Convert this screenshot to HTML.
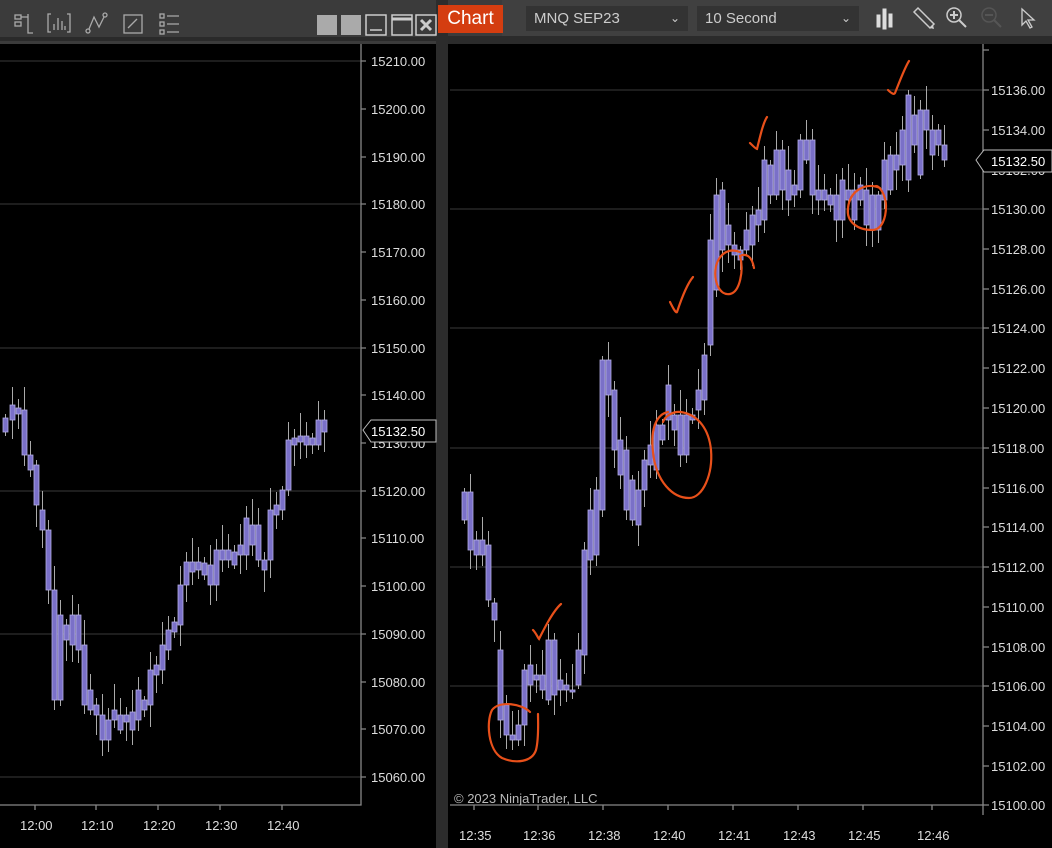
<!DOCTYPE html><html><head><meta charset="utf-8"><style>
body{margin:0;width:1052px;height:848px;background:#000;overflow:hidden;font-family:"Liberation Sans",sans-serif;position:relative}
.a{position:absolute}
svg text{font-family:"Liberation Sans",sans-serif}
</style></head><body>
<div class="a" style="left:0;top:0;width:1052px;height:44px;background:#3b3b3b"></div>
<div class="a" style="left:0;top:37px;width:436px;height:4px;background:#2a2a2a"></div>
<div class="a" style="left:502px;top:0;width:550px;height:36px;background:#404040"></div>
<div class="a" style="left:448px;top:36px;width:604px;height:8px;background:#2b2b2b"></div>
<div class="a" style="left:436px;top:0;width:12px;height:848px;background:#2c2c2c"></div>
<div class="a" style="left:438px;top:5px;width:65px;height:28px;background:#d43d10;color:#fff;font-size:19px;line-height:28px;text-align:center">Chart</div>
<div class="a" style="left:526px;top:6px;width:162px;height:25px;background:#333;color:#ccc;font-size:15px;line-height:25px;padding-left:8px;box-sizing:border-box">MNQ SEP23<span style="position:absolute;right:8px;font-size:12px">&#8964;</span></div>
<div class="a" style="left:697px;top:6px;width:162px;height:25px;background:#333;color:#ccc;font-size:15px;line-height:25px;padding-left:8px;box-sizing:border-box">10 Second<span style="position:absolute;right:8px;font-size:12px">&#8964;</span></div>
<svg class="a" style="left:0;top:0" width="1052" height="44">
<g stroke="#aaa" stroke-width="1.3" fill="none">
<rect x="15" y="15" width="6" height="4"/><rect x="15" y="22" width="6" height="4"/><path d="M21 17h7M28 14v19h5"/>
<path d="M51 14h-3v18h3M67 14h3v18h-3M54 30v-6M58 30v-12M62 30v-9M65 30v-4"/>
<circle cx="88" cy="31" r="2"/><circle cx="105" cy="15" r="2"/><path d="M89 29l5-12 5 10 5-10"/>
<rect x="124" y="15" width="18" height="18"/><path d="M128 28l9-9"/>
<rect x="160" y="14" width="4" height="4"/><rect x="160" y="22" width="4" height="4"/><rect x="160" y="30" width="4" height="4"/><path d="M167 16h12M167 24h12M167 32h12"/>
</g>
<rect x="317" y="15" width="20" height="20" fill="#aaa"/><rect x="341" y="15" width="20" height="20" fill="#aaa"/>
<g stroke="#ccc" stroke-width="1.5" fill="none"><rect x="366" y="15" width="20" height="20"/><path d="M370 30h12"/><rect x="392" y="15" width="20" height="20"/><path d="M392 19h20" stroke-width="3"/><rect x="416" y="15" width="20" height="20"/><path d="M421 20l10 10M431 20l-10 10" stroke-width="3"/></g>
<g fill="#ddd" stroke="#ddd"><rect x="877" y="15" width="3" height="12"/><rect x="883" y="9" width="3" height="20"/><rect x="889" y="14" width="3" height="13"/></g>
<path d="M914 12l4-4 16 16-4 4z" fill="none" stroke="#ccc" stroke-width="1.5"/><path d="M930 28l4 1-1-4" fill="#ccc"/>
<circle cx="954" cy="15" r="7" fill="none" stroke="#ccc" stroke-width="1.5"/><path d="M950 15h8M954 11v8M959 20l7 7" stroke="#ccc" stroke-width="2"/>
<circle cx="989" cy="15" r="7" fill="none" stroke="#555" stroke-width="1.5"/><path d="M985 15h8M994 20l7 7" stroke="#555" stroke-width="2"/>
<path d="M1022 9l0 16 4-4 4 7 2-1-4-7 6 0z" fill="none" stroke="#ccc" stroke-width="1.3"/>
</svg>
<svg id="s" class="a" style="left:0;top:0" width="1052" height="848">
<g stroke="#3a3a3a" stroke-width="1">
<path d="M0 61H361M0 204H361M0 348H361M0 491H361M0 634H361M0 777H361"/>
<path d="M450 90H983M450 209H983M450 328H983M450 448H983M450 567H983M450 686H983"/>
</g>
<g stroke="#888" stroke-width="1.3" fill="none">
<path d="M361 44V805H0"/><path d="M983 44V815M450 805H983"/>
<path d="M361 61h5M361 109h5M361 157h5M361 204h5M361 252h5M361 300h5M361 348h5M361 395h5M361 443h5M361 491h5M361 538h5M361 586h5M361 634h5M361 682h5M361 729h5M361 777h5"/>
<path d="M983 50h6M983 90h6M983 130h6M983 170h6M983 209h6M983 249h6M983 289h6M983 328h6M983 368h6M983 408h6M983 448h6M983 488h6M983 527h6M983 567h6M983 607h6M983 647h6M983 686h6M983 726h6M983 766h6M983 805h6"/>
<path d="M35 805v5M96 805v5M158 805v5M220 805v5M282 805v5M474 805v5M538 805v5M603 805v5M668 805v5M733 805v5M798 805v5M863 805v5M932 805v5"/>
</g>
<g fill="#ddd" font-size="13">
<text x="371" y="66">15210.00</text><text x="371" y="114">15200.00</text><text x="371" y="162">15190.00</text><text x="371" y="209">15180.00</text><text x="371" y="257">15170.00</text><text x="371" y="305">15160.00</text><text x="371" y="353">15150.00</text><text x="371" y="400">15140.00</text><text x="371" y="448">15130.00</text><text x="371" y="496">15120.00</text><text x="371" y="543">15110.00</text><text x="371" y="591">15100.00</text><text x="371" y="639">15090.00</text><text x="371" y="687">15080.00</text><text x="371" y="734">15070.00</text><text x="371" y="782">15060.00</text>
<text x="991" y="95">15136.00</text><text x="991" y="135">15134.00</text><text x="991" y="175">15132.00</text><text x="991" y="214">15130.00</text><text x="991" y="254">15128.00</text><text x="991" y="294">15126.00</text><text x="991" y="333">15124.00</text><text x="991" y="373">15122.00</text><text x="991" y="413">15120.00</text><text x="991" y="453">15118.00</text><text x="991" y="493">15116.00</text><text x="991" y="532">15114.00</text><text x="991" y="572">15112.00</text><text x="991" y="612">15110.00</text><text x="991" y="652">15108.00</text><text x="991" y="691">15106.00</text><text x="991" y="731">15104.00</text><text x="991" y="771">15102.00</text><text x="991" y="810">15100.00</text>
<text x="20" y="830">12:00</text><text x="81" y="830">12:10</text><text x="143" y="830">12:20</text><text x="205" y="830">12:30</text><text x="267" y="830">12:40</text>
<text x="459" y="840">12:35</text><text x="523" y="840">12:36</text><text x="588" y="840">12:38</text><text x="653" y="840">12:40</text><text x="718" y="840">12:41</text><text x="783" y="840">12:43</text><text x="848" y="840">12:45</text><text x="917" y="840">12:46</text>
<text x="454" y="803" fill="#bbb">© 2023 NinjaTrader, LLC</text>
</g>
<path d="M363 430l8-10h65v22h-65z" fill="#000" stroke="#bbb"/><text x="371" y="436" fill="#fff" font-size="13">15132.50</text>
<path d="M976 160l8-10h68v22h-68z" fill="#000" stroke="#bbb"/><text x="991" y="166" fill="#fff" font-size="13">15132.50</text>
<g id="c"></g>
<g stroke="#e8501a" stroke-width="2.2" fill="none" stroke-linecap="round">
<path d="M530 712c-8-8-30-12-38-2-6 12-4 40 10 48 14 6 30 4 34-8 3-12 2-30 2-36"/>
<path d="M533 630c3 3 5 8 6 9 5-10 14-28 22-35"/>
<path d="M668 412c-10 2-18 14-15 40 3 30 20 46 36 46 14 0 24-24 22-48-2-20-12-35-30-38-8-1-16 4-18 10"/>
<path d="M670 302c2 4 6 12 7 10 4-12 10-28 16-35"/>
<path d="M740 252c-10-4-20 0-24 14-3 16 4 30 14 28 10-2 14-24 10-38 6-3 12 0 14 12"/>
<path d="M750 143c3 3 6 6 7 6 3-12 6-26 10-32"/>
<path d="M880 188c-14-6-30 2-32 20-2 14 10 22 24 22 10 0 14-12 14-24 0-10-6-20-10-20"/>
<path d="M888 90c3 3 6 5 7 3 4-10 10-26 14-32"/>
</g>
</svg>
<script>
var L=[[3,418,432],[10,405,420],[16,408,414],[22,410,455],[28,455,470],[34,465,505],[40,510,530],[46,530,590],[52,590,700],[58,615,700],[64,625,640],[70,615,645],[76,615,650],[82,645,705],[88,690,710],[94,705,715],[100,715,740],[106,720,740],[112,710,720],[118,715,730],[124,715,722],[130,712,730],[136,690,720],[142,700,710],[148,670,705],[154,665,675],[160,645,670],[166,630,650],[172,622,632],[178,585,625],[184,562,585],[190,562,572],[196,562,570],[202,563,575],[208,565,585],[214,550,585],[220,550,560],[226,550,560],[232,552,565],[238,545,555],[244,518,555],[250,525,545],[256,525,560],[262,560,570],[268,510,560],[274,505,515],[280,490,510],[286,440,490],[292,438,445],[298,436,442],[304,436,445],[310,438,445],[316,420,445],[322,420,432]];
var R=[[462,492,520],[468,492,550],[474,540,555],[480,540,555],[486,545,600],[492,603,620],[498,650,720],[504,705,735],[510,735,740],[516,725,740],[522,670,725],[528,665,685],[534,675,680],[540,675,690],[546,640,700],[552,640,695],[558,680,690],[564,685,690],[570,690,691],[576,650,685],[582,550,655],[588,510,560],[594,490,555],[600,360,510],[606,360,395],[612,390,450],[618,440,475],[624,450,510],[630,480,520],[636,490,525],[642,460,490],[648,445,465],[654,425,470],[660,425,440],[666,385,420],[672,415,430],[678,415,455],[684,415,455],[690,415,420],[696,390,410],[702,355,400],[708,240,345],[714,195,290],[720,190,250],[726,225,245],[732,245,255],[738,250,260],[744,230,250],[750,215,245],[756,210,225],[762,160,220],[768,165,195],[774,150,195],[780,150,190],[786,170,200],[792,185,195],[798,140,190],[804,140,160],[810,140,195],[816,190,200],[822,190,200],[828,195,205],[834,195,220],[840,180,220],[846,190,200],[852,190,220],[858,185,200],[864,190,225],[870,195,230],[876,195,230],[882,160,200],[888,155,190],[894,155,170],[900,130,165],[906,95,180],[912,115,145],[918,110,175],[924,110,130],[930,130,155],[936,130,145],[942,145,160]];
var g=document.getElementById('c'),h='';
function d(a,w){a.forEach(function(c,i){var t=(i*37)%23+4,b=(i*53)%19+4;h+='<line x1="'+(c[0]+w/2)+'" x2="'+(c[0]+w/2)+'" y1="'+(c[1]-t)+'" y2="'+(c[2]+b)+'" stroke="#aaa" stroke-width="1"/><rect x="'+c[0]+'" y="'+c[1]+'" width="'+w+'" height="'+Math.max(2,c[2]-c[1])+'" fill="#7a70c8" stroke="#b4aee6" stroke-width="0.8"/>';});}
d(L,5);d(R,5);g.innerHTML=h;
</script>
</body></html>
